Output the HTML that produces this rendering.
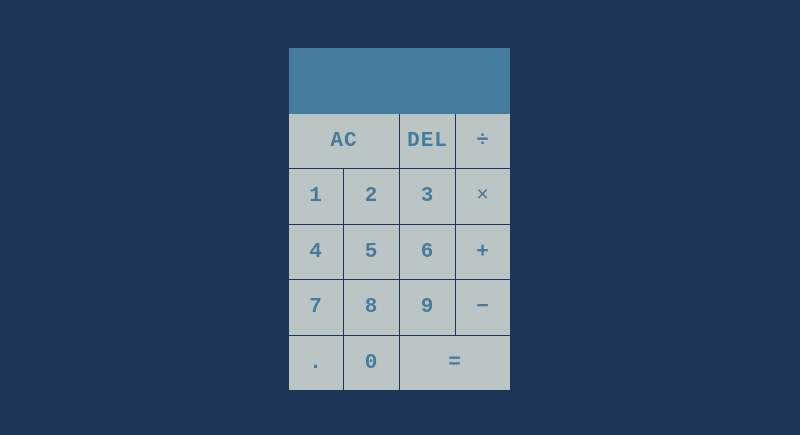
<!DOCTYPE html>
<html><head><style>
html,body{margin:0;padding:0;width:800px;height:435px;background:#1d3557;overflow:hidden}
.calc{position:absolute;left:289px;top:48px;width:221px}
.disp{height:66px;background:#457b9d}
.grid{display:grid;grid-template-columns:54px 55px 55px 54px;grid-template-rows:54px 55px 54px 55px 54px;background:#1d3557;gap:1px;width:221px}
.grid div{background:#bbc6c4;color:#457b9d;font:bold 21px "Liberation Mono",monospace;display:flex;align-items:center;justify-content:center;letter-spacing:1px}
.s2{grid-column:span 2}
</style></head><body>
<div class="calc"><div class="disp"></div>
<div class="grid">
<div class="s2">AC</div><div>DEL</div><div>÷</div>
<div>1</div><div>2</div><div>3</div><div style="font-weight:normal">×</div>
<div>4</div><div>5</div><div>6</div><div>+</div>
<div>7</div><div>8</div><div>9</div><div>−</div>
<div>.</div><div>0</div><div class="s2">=</div>
</div></div>
</body></html>
